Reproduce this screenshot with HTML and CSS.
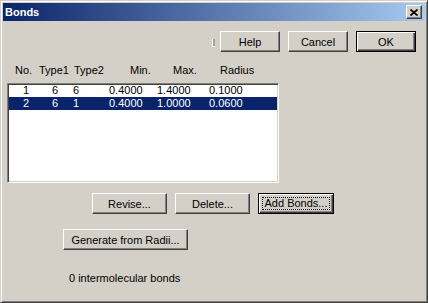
FILE: index.html
```html
<!DOCTYPE html>
<html lang="en">
<head>
    <meta charset="UTF-8">
    <title>Bonds</title>
    <link rel="stylesheet" href="styles.css">
</head>
<body>

    <div class="window">
        <div class="titlebar">
            <span class="title">Bonds</span>
            <span class="close-btn">
                <svg width="8" height="7" viewBox="0 0 8 7">
                    <path d="M0.5 0.5 L7.5 6.5 M7.5 0.5 L0.5 6.5" stroke="#000" stroke-width="1.7" fill="none"/>
                </svg>
            </span>
        </div>

        <div class="top-row">
            <span class="grip"></span>
            <button class="btn">Help</button>
            <button class="btn">Cancel</button>
            <button class="btn default">OK</button>
        </div>

        <div class="headers">
            <span>No.</span>
            <span>Type1</span>
            <span>Type2</span>
            <span>Min.</span>
            <span>Max.</span>
            <span>Radius</span>
        </div>

        <div class="listbox">
            <div class="row">
                <span class="right">1</span>
                <span class="right">6</span>
                <span class="type2">6</span>
                <span>0.4000</span>
                <span>1.4000</span>
                <span>0.1000</span>
            </div>
            <div class="row selected">
                <span class="right">2</span>
                <span class="right">6</span>
                <span class="type2">1</span>
                <span>0.4000</span>
                <span>1.0000</span>
                <span>0.0600</span>
            </div>
        </div>

        <div class="actions">
            <button class="btn revise">Revise...</button>
            <button class="btn delete">Delete...</button>
            <button class="btn default add"><span class="focus">Add Bonds...</span></button>
        </div>

        <div class="generate">
            <button class="btn">Generate from Radii...</button>
        </div>

        <div class="status">0 intermolecular bonds</div>
    </div>

</body>
</html>
```

FILE: styles.css
```css
* {
    box-sizing: border-box;
}
body {
    margin: 0;
    background: #d4d0c8;
    font-family: "Liberation Sans", Arial, sans-serif;
    font-size: 11px;
    color: #000;
}
.window {
    width: 428px;
    height: 303px;
    padding: 2px;
    background: #d4d0c8;
    border: 1px solid;
    border-color: #d4d0c8 #404040 #404040 #d4d0c8;
    box-shadow: inset 1px 1px #fff, inset -1px -1px #808080;
}
.titlebar {
    height: 18px;
    display: flex;
    align-items: center;
    justify-content: space-between;
    padding: 0 3px 0 2px;
    background: linear-gradient(to right, #0a246a, #a6caf0);
    color: #fff;
    font-weight: bold;
    font-size: 11px;
}
.close-btn {
    width: 16px;
    height: 14px;
    display: flex;
    align-items: center;
    justify-content: center;
    background: #d4d0c8;
    border: 1px solid;
    border-color: #fff #404040 #404040 #fff;
    box-shadow: inset -1px -1px #808080;
}
.close-btn svg {
    display: block;
}
.btn {
    height: 21px;
    padding: 0;
    font-family: inherit;
    font-size: 11px;
    color: #000;
    background: #d4d0c8;
    border: 1px solid;
    border-color: #fff #404040 #404040 #fff;
    box-shadow: inset -1px -1px #808080;
}
.btn.default {
    border-color: #000;
    box-shadow: inset 1px 1px #fff, inset -1px -1px #404040, inset -2px -2px #808080;
}
.top-row {
    display: flex;
    justify-content: flex-end;
    align-items: center;
    margin-top: 10px;
    padding-right: 9px;
}
.top-row .btn {
    width: 60px;
    margin-left: 8px;
}
.grip {
    width: 3px;
    height: 8px;
    margin-top: 3px;
    margin-right: -3px;
    background: #a0a0a0;
    border-left: 1px solid #fff;
    border-bottom: 1px solid #fff;
}
.headers {
    display: grid;
    grid-template-columns: 24px 35px 56px 43px 47px auto;
    margin-top: 12px;
    padding-left: 12px;
    line-height: 13px;
}
.listbox {
    width: 272px;
    height: 100px;
    margin-top: 6px;
    margin-left: 4px;
    padding: 0 1px;
    background: #fff;
    border: 1px solid;
    border-color: #808080 #fff #fff #808080;
    box-shadow: inset 1px 1px #404040, inset -1px -1px #d4d0c8;
}
.row {
    display: grid;
    grid-template-columns: 20px 29px 51px 48px 52px 1fr;
    height: 13px;
    line-height: 13px;
}
.row .right {
    text-align: right;
}
.row .type2 {
    padding-left: 15px;
}
.row.selected {
    background: #0a246a;
    color: #fff;
}
.actions {
    display: flex;
    gap: 8px;
    margin-top: 10px;
    margin-left: 89px;
}
.revise, .delete {
    width: 75px;
}
.add {
    width: 76px;
}
.focus {
    display: block;
    margin: 0 3px;
    line-height: 11px;
    border: 1px dotted #000;
}
.generate {
    margin-top: 15px;
    margin-left: 60px;
}
.generate .btn {
    width: 125px;
}
.status {
    margin-top: 22px;
    margin-left: 66px;
    line-height: 13px;
}
```
